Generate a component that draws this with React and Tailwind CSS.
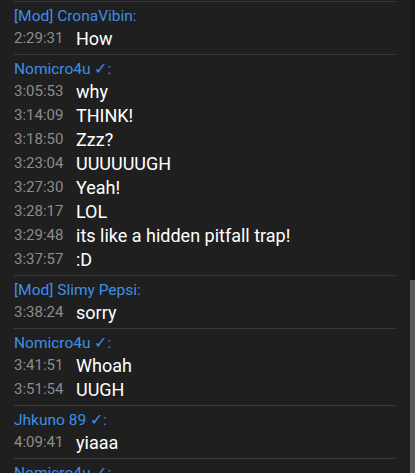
import React from 'react';

const groups = [
  { name: '[Mod] CronaVibin:', messages: [['2:29:31', 'How']] },
  {
    name: 'Nomicro4u ✓:',
    messages: [
      ['3:05:53', 'why'],
      ['3:14:09', 'THINK!'],
      ['3:18:50', 'Zzz?'],
      ['3:23:04', 'UUUUUUGH'],
      ['3:27:30', 'Yeah!'],
      ['3:28:17', 'LOL'],
      ['3:29:48', 'its like a hidden pitfall trap!'],
      ['3:37:57', ':D'],
    ],
  },
  { name: '[Mod] Slimy Pepsi:', messages: [['3:38:24', 'sorry']] },
  {
    name: 'Nomicro4u ✓:',
    messages: [
      ['3:41:51', 'Whoah'],
      ['3:51:54', 'UUGH'],
    ],
  },
  { name: 'Jhkuno 89 ✓:', messages: [['4:09:41', 'yiaaa']] },
  { name: 'Nomicro4u ✓:', messages: [['4:10:02', 'ok']] },
];

const App = () => {
  return (
    <div
      className="flex w-[415px] h-[473px] overflow-hidden bg-[#1f1f1f]"
      style={{ fontFamily: 'Roboto, "Liberation Sans", sans-serif' }}
    >
      <div className="flex-1 pl-[14px] pr-[15px] pt-px">
        {groups.map((group, i) => (
          <div key={i} className="border-t border-[#3a3a3a] pt-1 pb-1">
            <div className="h-5 leading-5 text-[15.5px] text-[#3d8ee6] whitespace-nowrap">{group.name}</div>
            {group.messages.map(([time, text], j) => (
              <div key={j} className="flex items-center h-6 pt-px whitespace-nowrap">
                <span className="w-[62px] shrink-0 text-[15px] text-[#8c8c8c]">{time}</span>
                <span className="text-[18px] text-white">{text}</span>
              </div>
            ))}
          </div>
        ))}
      </div>
      {/* scrollbar */}
      <div className="w-[5px] flex flex-col bg-[#161616]">
        <div className="h-[280px]" />
        <div className="flex-1 bg-[#5c5c5c]" />
      </div>
    </div>
  );
};

export default App;
